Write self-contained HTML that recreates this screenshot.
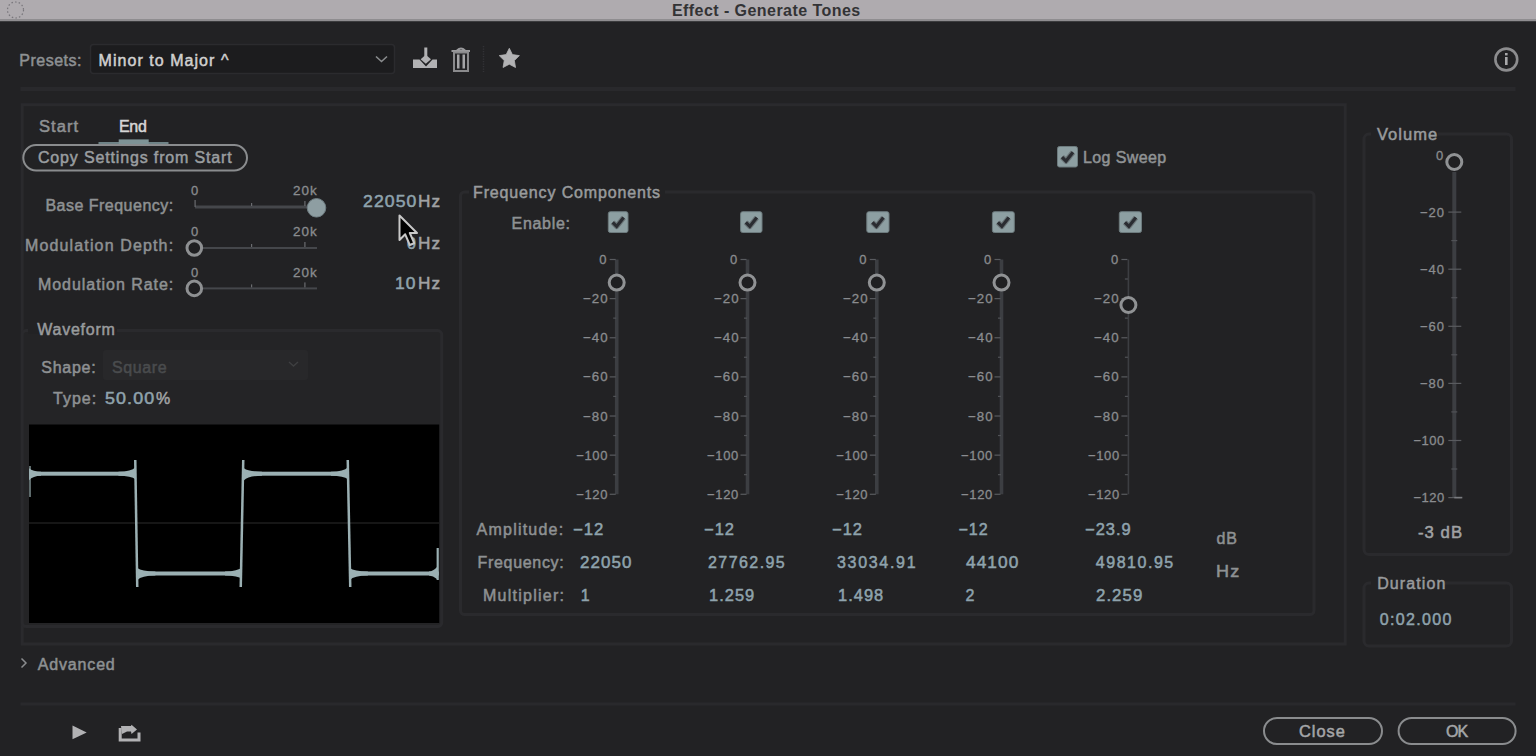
<!DOCTYPE html>
<html><head><meta charset="utf-8"><style>
html,body{margin:0;padding:0;}
body{width:1536px;height:756px;overflow:hidden;background:#222224;position:relative;font-family:"Liberation Sans",sans-serif;}
.t{position:absolute;white-space:pre;font-family:"Liberation Sans",sans-serif;-webkit-text-stroke:0.5px currentColor;}
.a{position:absolute;box-sizing:border-box;}
svg{position:absolute;left:0;top:0;}
</style></head><body>
<svg width="1536" height="756" viewBox="0 0 1536 756">
<rect x="0" y="0" width="1536" height="21" fill="#afabaf"/>
<rect x="0" y="19" width="1536" height="2" fill="#8f8d90"/>
<rect x="0" y="21" width="1536" height="1" fill="#3c3c3e"/>
<circle cx="15.5" cy="10" r="8" fill="none" stroke="#77757a" stroke-width="1.2" stroke-dasharray="1.5 2.2"/>
<rect x="90.5" y="44.5" width="304" height="29" rx="3" fill="#1c1c1e" stroke="#2b2b2e" stroke-width="1.5"/>
<polyline points="376,56.5 381.5,61.5 387,56.5" fill="none" stroke="#8a8c8e" stroke-width="1.6"/>
<polygon points="413,59.5 419.5,59.5 426,66.5 432.5,59.5 437,59.5 437,68 413,68" fill="#b2b2b4"/>
<rect x="424.3" y="47.5" width="3" height="9" fill="#b2b2b4"/>
<polygon points="425.8,54.8 431,59.3 425.8,63.8 420.6,59.3" fill="#b2b2b4"/>
<path d="M451.5,51 H470 M457,50.5 Q461,46.5 465,50.5" fill="none" stroke="#9a9a9c" stroke-width="2"/>
<rect x="454" y="52.5" width="14" height="18.5" fill="none" stroke="#8a8a8c" stroke-width="2"/>
<rect x="457" y="54.5" width="2.5" height="14" fill="#a4a4a6"/>
<rect x="462.5" y="54.5" width="2.5" height="14" fill="#a4a4a6"/>
<line x1="483.5" y1="46" x2="483.5" y2="72" stroke="#333336" stroke-width="1.5" stroke-dasharray="1.2 1.3"/>
<polygon points="509.30,48.30 512.42,54.61 519.38,55.62 514.34,60.54 515.53,67.48 509.30,64.20 503.07,67.48 504.26,60.54 499.22,55.62 506.18,54.61" fill="#b2b2b4" stroke="#b2b2b4" stroke-width="0.8" stroke-linejoin="round"/>
<circle cx="1506.3" cy="59.5" r="10.9" fill="none" stroke="#8c8c8e" stroke-width="2.6"/>
<rect x="1505" y="57" width="2.6" height="8" fill="#a8a8aa"/><rect x="1505" y="53" width="2.6" height="2.4" fill="#a8a8aa"/>
<rect x="20.5" y="87" width="1495" height="4" fill="#29292c"/>
<rect x="22.2" y="104.7" width="1323" height="539.3" fill="none" stroke="#2a2a2d" stroke-width="3"/>
<rect x="22.2" y="330.6" width="419.5" height="296" rx="4" fill="#242426" stroke="#2a2a2d" stroke-width="3"/>
<rect x="460.5" y="192" width="853.5" height="422.5" rx="4" fill="none" stroke="#2a2a2d" stroke-width="3"/>
<rect x="1364" y="134" width="147.5" height="420.5" rx="5" fill="none" stroke="#2a2a2d" stroke-width="3"/>
<rect x="1364" y="583" width="147.5" height="63" rx="5" fill="none" stroke="#2a2a2d" stroke-width="3"/>
<rect x="28" y="327" width="89" height="7" fill="#222224"/>
<rect x="469" y="188" width="196" height="8" fill="#222224"/>
<rect x="1371" y="130" width="67" height="8" fill="#222224"/>
<rect x="1371" y="579" width="74" height="8" fill="#222224"/>
<rect x="98.5" y="142" width="70" height="2.5" fill="#6f8387"/>
<rect x="118.7" y="139.4" width="30" height="5" fill="#7e9396"/>
<rect x="23.3" y="145" width="223.7" height="25.5" rx="12.75" fill="none" stroke="#8a8c8e" stroke-width="2"/>
<rect x="195" y="205.5" width="114" height="3" fill="#45474b"/>
<rect x="194.5" y="200" width="1.2" height="7" fill="#6a6c70"/>
<rect x="251" y="203" width="1.2" height="3" fill="#6a6c70"/>
<rect x="304.3" y="201" width="1.2" height="5" fill="#6a6c70"/>
<circle cx="316.5" cy="207.8" r="9.3" fill="#8e9ea2" stroke="#6f7d82" stroke-width="1"/>
<rect x="203" y="247" width="114" height="2" fill="#45474b"/>
<rect x="251" y="244" width="1.2" height="3" fill="#6a6c70"/>
<rect x="304.3" y="242" width="1.2" height="5" fill="#6a6c70"/>
<circle cx="194.3" cy="248" r="7.3" fill="#1f1f21" stroke="#8e9092" stroke-width="3"/>
<rect x="203" y="287.4" width="114" height="2" fill="#45474b"/>
<rect x="251" y="284.4" width="1.2" height="3" fill="#6a6c70"/>
<rect x="304.3" y="282.4" width="1.2" height="5" fill="#6a6c70"/>
<circle cx="194.3" cy="288.4" r="7.3" fill="#1f1f21" stroke="#8e9092" stroke-width="3"/>
<rect x="29" y="424.5" width="410.2" height="198.5" fill="#000"/>
<line x1="29" y1="523" x2="439" y2="523" stroke="#2c2c2c" stroke-width="1"/>
<rect x="29" y="471.7" width="106.4" height="4" fill="#9bb0b3"/>
<rect x="137" y="571.5" width="103.4" height="4" fill="#9bb0b3"/>
<rect x="243.3" y="471.7" width="104.59999999999997" height="4" fill="#9bb0b3"/>
<rect x="350.4" y="571.5" width="88.40000000000003" height="4" fill="#9bb0b3"/>
<polygon points="134,460 136.5,460 138.5,587 136,587" fill="#9bb0b3"/>
<polygon points="239.5,587 242,587 244.5,460 242,460" fill="#9bb0b3"/>
<polygon points="346.5,460 349,460 351.5,587 349,587" fill="#9bb0b3"/>
<polygon points="436.6,548 438.8,548 438.8,580 436.6,580" fill="#9bb0b3"/>
<polygon points="29,466 31,466 31,497 29,497" fill="#9bb0b3" opacity="0.6"/>
<path d="M118.4,471.7 Q131.4,471.5 135.4,467.2 L135.4,479.2 Q131.4,475.9 118.4,475.7 Z" fill="#9bb0b3"/>
<path d="M155.4,571.5 Q141.4,571.3 137.4,568.0 L137.4,580.0 Q141.4,575.7 155.4,575.5 Z" fill="#9bb0b3"/>
<path d="M330.9,471.7 Q343.9,471.5 347.9,467.2 L347.9,479.2 Q343.9,475.9 330.9,475.7 Z" fill="#9bb0b3"/>
<path d="M367.9,571.5 Q353.9,571.3 349.9,568.0 L349.9,580.0 Q353.9,575.7 367.9,575.5 Z" fill="#9bb0b3"/>
<path d="M225,571.5 Q238,571.3 242,567.0 L242,579.0 Q238,575.7 225,575.5 Z" fill="#9bb0b3"/>
<path d="M262,471.7 Q248,471.5 244,468.2 L244,480.2 Q248,475.9 262,475.7 Z" fill="#9bb0b3"/>
<path d="M41,471.7 Q33,471.5 29,468.2 L29,480.2 Q33,475.9 41,475.7 Z" fill="#9bb0b3"/>
<path d="M429,571.5 Q433,571.3 437,567.0 L437,579.0 Q433,575.7 429,575.5 Z" fill="#9bb0b3"/>
<rect x="103" y="350" width="205" height="30" rx="3" fill="#28282a"/>
<polyline points="289,362 293.5,366 298,362" fill="none" stroke="#3e3f41" stroke-width="1.4"/>
<rect x="1057.5" y="146.5" width="20.0" height="20.5" rx="2" fill="#8d9fa2" stroke="#6d7b7e" stroke-width="1"/>
<polyline points="1062.0,157.05 1066.0,161.05 1073.0,152.25" fill="none" stroke="#6c7679" stroke-width="5.5" stroke-linejoin="round"/>
<polyline points="1062.0,157.05 1066.0,161.05 1073.0,152.25" fill="none" stroke="#2a2c31" stroke-width="3.2"/>
<rect x="608.3" y="211.7" width="19.700000000000045" height="20.80000000000001" rx="2" fill="#8d9fa2" stroke="#6d7b7e" stroke-width="1"/>
<polyline points="612.65,222.4 616.65,226.4 623.65,217.6" fill="none" stroke="#6c7679" stroke-width="5.5" stroke-linejoin="round"/>
<polyline points="612.65,222.4 616.65,226.4 623.65,217.6" fill="none" stroke="#2a2c31" stroke-width="3.2"/>
<rect x="740.6" y="211.7" width="21.399999999999977" height="20.80000000000001" rx="2" fill="#8d9fa2" stroke="#6d7b7e" stroke-width="1"/>
<polyline points="745.8,222.4 749.8,226.4 756.8,217.6" fill="none" stroke="#6c7679" stroke-width="5.5" stroke-linejoin="round"/>
<polyline points="745.8,222.4 749.8,226.4 756.8,217.6" fill="none" stroke="#2a2c31" stroke-width="3.2"/>
<rect x="866.8" y="211.7" width="22.200000000000045" height="20.80000000000001" rx="2" fill="#8d9fa2" stroke="#6d7b7e" stroke-width="1"/>
<polyline points="872.4,222.4 876.4,226.4 883.4,217.6" fill="none" stroke="#6c7679" stroke-width="5.5" stroke-linejoin="round"/>
<polyline points="872.4,222.4 876.4,226.4 883.4,217.6" fill="none" stroke="#2a2c31" stroke-width="3.2"/>
<rect x="992.4" y="211.7" width="21.899999999999977" height="20.80000000000001" rx="2" fill="#8d9fa2" stroke="#6d7b7e" stroke-width="1"/>
<polyline points="997.8499999999999,222.4 1001.8499999999999,226.4 1008.8499999999999,217.6" fill="none" stroke="#6c7679" stroke-width="5.5" stroke-linejoin="round"/>
<polyline points="997.8499999999999,222.4 1001.8499999999999,226.4 1008.8499999999999,217.6" fill="none" stroke="#2a2c31" stroke-width="3.2"/>
<rect x="1119.3" y="211.7" width="22.200000000000045" height="20.80000000000001" rx="2" fill="#8d9fa2" stroke="#6d7b7e" stroke-width="1"/>
<polyline points="1124.9,222.4 1128.9,226.4 1135.9,217.6" fill="none" stroke="#6c7679" stroke-width="5.5" stroke-linejoin="round"/>
<polyline points="1124.9,222.4 1128.9,226.4 1135.9,217.6" fill="none" stroke="#2a2c31" stroke-width="3.2"/>
<rect x="614.9000000000001" y="259.5" width="3.6" height="234.78000000000003" fill="#3c3e42"/>
<rect x="609.7" y="258.9" width="6" height="1.2" fill="#595b5f"/>
<rect x="613.2" y="278.4" width="3" height="1.2" fill="#505256"/>
<rect x="609.7" y="298.03" width="6" height="1.2" fill="#595b5f"/>
<rect x="613.2" y="317.53" width="3" height="1.2" fill="#505256"/>
<rect x="609.7" y="337.15999999999997" width="6" height="1.2" fill="#595b5f"/>
<rect x="613.2" y="356.65999999999997" width="3" height="1.2" fill="#505256"/>
<rect x="609.7" y="376.28999999999996" width="6" height="1.2" fill="#595b5f"/>
<rect x="613.2" y="395.78999999999996" width="3" height="1.2" fill="#505256"/>
<rect x="609.7" y="415.41999999999996" width="6" height="1.2" fill="#595b5f"/>
<rect x="613.2" y="434.91999999999996" width="3" height="1.2" fill="#505256"/>
<rect x="609.7" y="454.54999999999995" width="6" height="1.2" fill="#595b5f"/>
<rect x="613.2" y="474.04999999999995" width="3" height="1.2" fill="#505256"/>
<rect x="609.7" y="493.68" width="6" height="1.2" fill="#595b5f"/>
<circle cx="616.7" cy="282.6" r="7.5" fill="#1f1f21" stroke="#909294" stroke-width="3"/>
<rect x="745.7" y="259.5" width="3.6" height="234.78000000000003" fill="#3c3e42"/>
<rect x="740.5" y="258.9" width="6" height="1.2" fill="#595b5f"/>
<rect x="744.0" y="278.4" width="3" height="1.2" fill="#505256"/>
<rect x="740.5" y="298.03" width="6" height="1.2" fill="#595b5f"/>
<rect x="744.0" y="317.53" width="3" height="1.2" fill="#505256"/>
<rect x="740.5" y="337.15999999999997" width="6" height="1.2" fill="#595b5f"/>
<rect x="744.0" y="356.65999999999997" width="3" height="1.2" fill="#505256"/>
<rect x="740.5" y="376.28999999999996" width="6" height="1.2" fill="#595b5f"/>
<rect x="744.0" y="395.78999999999996" width="3" height="1.2" fill="#505256"/>
<rect x="740.5" y="415.41999999999996" width="6" height="1.2" fill="#595b5f"/>
<rect x="744.0" y="434.91999999999996" width="3" height="1.2" fill="#505256"/>
<rect x="740.5" y="454.54999999999995" width="6" height="1.2" fill="#595b5f"/>
<rect x="744.0" y="474.04999999999995" width="3" height="1.2" fill="#505256"/>
<rect x="740.5" y="493.68" width="6" height="1.2" fill="#595b5f"/>
<circle cx="747.5" cy="282.6" r="7.5" fill="#1f1f21" stroke="#909294" stroke-width="3"/>
<rect x="875.0" y="259.5" width="3.6" height="234.78000000000003" fill="#3c3e42"/>
<rect x="869.8" y="258.9" width="6" height="1.2" fill="#595b5f"/>
<rect x="873.3" y="278.4" width="3" height="1.2" fill="#505256"/>
<rect x="869.8" y="298.03" width="6" height="1.2" fill="#595b5f"/>
<rect x="873.3" y="317.53" width="3" height="1.2" fill="#505256"/>
<rect x="869.8" y="337.15999999999997" width="6" height="1.2" fill="#595b5f"/>
<rect x="873.3" y="356.65999999999997" width="3" height="1.2" fill="#505256"/>
<rect x="869.8" y="376.28999999999996" width="6" height="1.2" fill="#595b5f"/>
<rect x="873.3" y="395.78999999999996" width="3" height="1.2" fill="#505256"/>
<rect x="869.8" y="415.41999999999996" width="6" height="1.2" fill="#595b5f"/>
<rect x="873.3" y="434.91999999999996" width="3" height="1.2" fill="#505256"/>
<rect x="869.8" y="454.54999999999995" width="6" height="1.2" fill="#595b5f"/>
<rect x="873.3" y="474.04999999999995" width="3" height="1.2" fill="#505256"/>
<rect x="869.8" y="493.68" width="6" height="1.2" fill="#595b5f"/>
<circle cx="876.8" cy="282.6" r="7.5" fill="#1f1f21" stroke="#909294" stroke-width="3"/>
<rect x="999.7" y="259.5" width="3.6" height="234.78000000000003" fill="#3c3e42"/>
<rect x="994.5" y="258.9" width="6" height="1.2" fill="#595b5f"/>
<rect x="998.0" y="278.4" width="3" height="1.2" fill="#505256"/>
<rect x="994.5" y="298.03" width="6" height="1.2" fill="#595b5f"/>
<rect x="998.0" y="317.53" width="3" height="1.2" fill="#505256"/>
<rect x="994.5" y="337.15999999999997" width="6" height="1.2" fill="#595b5f"/>
<rect x="998.0" y="356.65999999999997" width="3" height="1.2" fill="#505256"/>
<rect x="994.5" y="376.28999999999996" width="6" height="1.2" fill="#595b5f"/>
<rect x="998.0" y="395.78999999999996" width="3" height="1.2" fill="#505256"/>
<rect x="994.5" y="415.41999999999996" width="6" height="1.2" fill="#595b5f"/>
<rect x="998.0" y="434.91999999999996" width="3" height="1.2" fill="#505256"/>
<rect x="994.5" y="454.54999999999995" width="6" height="1.2" fill="#595b5f"/>
<rect x="998.0" y="474.04999999999995" width="3" height="1.2" fill="#505256"/>
<rect x="994.5" y="493.68" width="6" height="1.2" fill="#595b5f"/>
<circle cx="1001.5" cy="282.6" r="7.5" fill="#1f1f21" stroke="#909294" stroke-width="3"/>
<rect x="1127.6000000000001" y="259.5" width="1.6" height="234.78000000000003" fill="#3c3e42"/>
<rect x="1121.4" y="258.9" width="6" height="1.2" fill="#595b5f"/>
<rect x="1124.9" y="278.4" width="3" height="1.2" fill="#505256"/>
<rect x="1121.4" y="298.03" width="6" height="1.2" fill="#595b5f"/>
<rect x="1124.9" y="317.53" width="3" height="1.2" fill="#505256"/>
<rect x="1121.4" y="337.15999999999997" width="6" height="1.2" fill="#595b5f"/>
<rect x="1124.9" y="356.65999999999997" width="3" height="1.2" fill="#505256"/>
<rect x="1121.4" y="376.28999999999996" width="6" height="1.2" fill="#595b5f"/>
<rect x="1124.9" y="395.78999999999996" width="3" height="1.2" fill="#505256"/>
<rect x="1121.4" y="415.41999999999996" width="6" height="1.2" fill="#595b5f"/>
<rect x="1124.9" y="434.91999999999996" width="3" height="1.2" fill="#505256"/>
<rect x="1121.4" y="454.54999999999995" width="6" height="1.2" fill="#595b5f"/>
<rect x="1124.9" y="474.04999999999995" width="3" height="1.2" fill="#505256"/>
<rect x="1121.4" y="493.68" width="6" height="1.2" fill="#595b5f"/>
<circle cx="1128.4" cy="305" r="7.5" fill="#1f1f21" stroke="#909294" stroke-width="3"/>
<rect x="1452.3" y="172" width="4" height="325.6" fill="#3c3e42"/>
<rect x="1448.3" y="211.5" width="13" height="1.2" fill="#595b5f"/>
<rect x="1451.3" y="240.0" width="6" height="1.2" fill="#505256"/>
<rect x="1448.3" y="268.59999999999997" width="13" height="1.2" fill="#595b5f"/>
<rect x="1451.3" y="297.09999999999997" width="6" height="1.2" fill="#505256"/>
<rect x="1448.3" y="325.7" width="13" height="1.2" fill="#595b5f"/>
<rect x="1451.3" y="354.2" width="6" height="1.2" fill="#505256"/>
<rect x="1448.3" y="382.79999999999995" width="13" height="1.2" fill="#595b5f"/>
<rect x="1451.3" y="411.29999999999995" width="6" height="1.2" fill="#505256"/>
<rect x="1448.3" y="439.9" width="13" height="1.2" fill="#595b5f"/>
<rect x="1451.3" y="468.4" width="6" height="1.2" fill="#505256"/>
<rect x="1448.3" y="497.0" width="13" height="1.2" fill="#595b5f"/>
<rect x="1454.3" y="496.8" width="8" height="1.6" fill="#7a7c80"/>
<circle cx="1454.3" cy="162" r="7.5" fill="#1f1f21" stroke="#909294" stroke-width="3"/>
<polyline points="21.5,658.5 26,663 21.5,667.5" fill="none" stroke="#8a8c8e" stroke-width="1.5"/>
<rect x="20.5" y="702.5" width="1495" height="3" fill="#29292c"/>
<polygon points="72.5,725.6 86.7,732.4 72.5,739.2" fill="#b2b2b4"/>
<polyline points="120.2,728 120.2,740 139,740 139,732.5" fill="none" stroke="#b2b2b4" stroke-width="3"/>
<polygon points="121,726 131,726 131.5,724.8 137,729.5 131.5,734 131,731.5 127,731.5 122,734" fill="#b2b2b4"/>
<rect x="1264" y="718" width="118" height="26" rx="13" fill="none" stroke="#8a8c8e" stroke-width="2"/>
<rect x="1398.6" y="718" width="117" height="26" rx="13" fill="none" stroke="#8a8c8e" stroke-width="2"/>
</svg>
<span class="t" style="left:671.9px;top:2.5px;font-size:16px;line-height:16px;letter-spacing:0.45px;color:#333335;font-weight:700;-webkit-text-stroke:0;">Effect - Generate Tones</span>
<span class="t" style="left:19.2px;top:52.9px;font-size:16px;line-height:16px;letter-spacing:0.52px;color:#8e9193;">Presets:</span>
<span class="t" style="left:98.5px;top:52.6px;font-size:16px;line-height:16px;letter-spacing:1.05px;color:#d0d0d0;">Minor to Major ^</span>
<span class="t" style="transform:scaleX(1.035);transform-origin:0 0;left:39.2px;top:119.1px;font-size:16px;line-height:16px;letter-spacing:1.00px;color:#8f9193;">Start</span>
<span class="t" style="left:118.9px;top:119.1px;font-size:16px;line-height:16px;letter-spacing:-0.20px;color:#d6d6d6;">End</span>
<span class="t" style="left:37.9px;top:150.4px;font-size:16px;line-height:16px;letter-spacing:0.85px;color:#9a9ea0;">Copy Settings from Start</span>
<span class="t" style="left:45.4px;top:197.9px;font-size:16px;line-height:16px;letter-spacing:0.49px;color:#8e9193;">Base Frequency:</span>
<span class="t" style="left:25.0px;top:237.9px;font-size:16px;line-height:16px;letter-spacing:1.14px;color:#8e9193;">Modulation Depth:</span>
<span class="t" style="left:37.9px;top:277.0px;font-size:16px;line-height:16px;letter-spacing:0.96px;color:#8e9193;">Modulation Rate:</span>
<span class="t" style="transform:scaleX(1.100);transform-origin:0 0;left:362.8px;top:194.1px;font-size:16px;line-height:16px;letter-spacing:1.00px;color:#8fa3ad;">22050</span>
<span class="t" style="transform:scaleX(1.074);transform-origin:0 0;left:417.5px;top:194.1px;font-size:16px;line-height:16px;letter-spacing:1.00px;color:#a0a2a4;">Hz</span>
<span class="t" style="left:407.0px;top:235.6px;font-size:16px;line-height:16px;letter-spacing:0.00px;color:#8fa3ad;">0</span>
<span class="t" style="transform:scaleX(1.074);transform-origin:0 0;left:417.5px;top:235.6px;font-size:16px;line-height:16px;letter-spacing:1.00px;color:#a0a2a4;">Hz</span>
<span class="t" style="transform:scaleX(1.089);transform-origin:0 0;left:394.9px;top:276.3px;font-size:16px;line-height:16px;letter-spacing:1.00px;color:#8fa3ad;">10</span>
<span class="t" style="transform:scaleX(1.074);transform-origin:0 0;left:417.5px;top:276.3px;font-size:16px;line-height:16px;letter-spacing:1.00px;color:#a0a2a4;">Hz</span>
<span class="t" style="left:191.0px;top:184.0px;font-size:13px;line-height:13px;letter-spacing:0.00px;color:#8a8c8f;-webkit-text-stroke:0.3px currentColor;">0</span>
<span class="t" style="transform:scaleX(1.035);transform-origin:0 0;left:292.7px;top:184.0px;font-size:13px;line-height:13px;letter-spacing:1.00px;color:#8a8c8f;-webkit-text-stroke:0.3px currentColor;">20k</span>
<span class="t" style="left:191.0px;top:225.3px;font-size:13px;line-height:13px;letter-spacing:0.00px;color:#8a8c8f;-webkit-text-stroke:0.3px currentColor;">0</span>
<span class="t" style="transform:scaleX(1.035);transform-origin:0 0;left:292.7px;top:225.3px;font-size:13px;line-height:13px;letter-spacing:1.00px;color:#8a8c8f;-webkit-text-stroke:0.3px currentColor;">20k</span>
<span class="t" style="left:191.0px;top:265.8px;font-size:13px;line-height:13px;letter-spacing:0.00px;color:#8a8c8f;-webkit-text-stroke:0.3px currentColor;">0</span>
<span class="t" style="transform:scaleX(1.035);transform-origin:0 0;left:292.7px;top:265.8px;font-size:13px;line-height:13px;letter-spacing:1.00px;color:#8a8c8f;-webkit-text-stroke:0.3px currentColor;">20k</span>
<span class="t" style="left:37.2px;top:322.2px;font-size:16px;line-height:16px;letter-spacing:0.77px;color:#999b9d;">Waveform</span>
<span class="t" style="left:41.3px;top:359.5px;font-size:16px;line-height:16px;letter-spacing:0.74px;color:#8e9193;">Shape:</span>
<span class="t" style="left:112.0px;top:359.5px;font-size:16px;line-height:16px;letter-spacing:0.60px;color:#4a4c4e;">Square</span>
<span class="t" style="left:53.0px;top:391.0px;font-size:16px;line-height:16px;letter-spacing:1.00px;color:#8e9193;">Type:</span>
<span class="t" style="transform:scaleX(1.116);transform-origin:0 0;left:104.9px;top:391.0px;font-size:16px;line-height:16px;letter-spacing:1.00px;color:#8fa3ad;">50.00</span>
<span class="t" style="left:156.0px;top:391.0px;font-size:16px;line-height:16px;letter-spacing:0.00px;color:#a0a2a4;">%</span>
<span class="t" style="left:473.0px;top:184.5px;font-size:16px;line-height:16px;letter-spacing:0.86px;color:#999b9d;">Frequency Components</span>
<span class="t" style="left:511.5px;top:215.8px;font-size:16px;line-height:16px;letter-spacing:0.71px;color:#8e9193;">Enable:</span>
<span class="t" style="left:1082.9px;top:150.3px;font-size:16px;line-height:16px;letter-spacing:0.40px;color:#909395;">Log Sweep</span>
<span class="t" style="left:476.6px;top:522.1px;font-size:16px;line-height:16px;letter-spacing:1.22px;color:#8e9193;">Amplitude:</span>
<span class="t" style="left:477.6px;top:555.2px;font-size:16px;line-height:16px;letter-spacing:0.67px;color:#8e9193;">Frequency:</span>
<span class="t" style="left:482.9px;top:588.3px;font-size:16px;line-height:16px;letter-spacing:1.27px;color:#8e9193;">Multiplier:</span>
<span class="t" style="transform:scaleX(1.043);transform-origin:0 0;left:572.8px;top:522.1px;font-size:16px;line-height:16px;letter-spacing:1.00px;color:#8fa3ad;">−12</span>
<span class="t" style="transform:scaleX(1.060);transform-origin:0 0;left:579.8px;top:555.2px;font-size:16px;line-height:16px;letter-spacing:1.00px;color:#8fa3ad;">22050</span>
<span class="t" style="left:580.8px;top:588.3px;font-size:16px;line-height:16px;letter-spacing:0.00px;color:#8fa3ad;">1</span>
<span class="t" style="transform:scaleX(1.029);transform-origin:0 0;left:704.0px;top:522.1px;font-size:16px;line-height:16px;letter-spacing:1.00px;color:#8fa3ad;">−12</span>
<span class="t" style="left:708.0px;top:555.2px;font-size:16px;line-height:16px;letter-spacing:1.43px;color:#8fa3ad;">27762.95</span>
<span class="t" style="transform:scaleX(1.026);transform-origin:0 0;left:708.5px;top:588.3px;font-size:16px;line-height:16px;letter-spacing:1.00px;color:#8fa3ad;">1.259</span>
<span class="t" style="transform:scaleX(1.029);transform-origin:0 0;left:831.7px;top:522.1px;font-size:16px;line-height:16px;letter-spacing:1.00px;color:#8fa3ad;">−12</span>
<span class="t" style="left:837.0px;top:555.2px;font-size:16px;line-height:16px;letter-spacing:1.69px;color:#8fa3ad;">33034.91</span>
<span class="t" style="transform:scaleX(1.026);transform-origin:0 0;left:837.8px;top:588.3px;font-size:16px;line-height:16px;letter-spacing:1.00px;color:#8fa3ad;">1.498</span>
<span class="t" style="left:958.5px;top:522.1px;font-size:16px;line-height:16px;letter-spacing:1.00px;color:#8fa3ad;">−12</span>
<span class="t" style="transform:scaleX(1.079);transform-origin:0 0;left:965.6px;top:555.2px;font-size:16px;line-height:16px;letter-spacing:1.00px;color:#8fa3ad;">44100</span>
<span class="t" style="left:965.6px;top:588.3px;font-size:16px;line-height:16px;letter-spacing:0.00px;color:#8fa3ad;">2</span>
<span class="t" style="transform:scaleX(1.028);transform-origin:0 0;left:1084.8px;top:522.1px;font-size:16px;line-height:16px;letter-spacing:1.00px;color:#8fa3ad;">−23.9</span>
<span class="t" style="left:1095.8px;top:555.2px;font-size:16px;line-height:16px;letter-spacing:1.53px;color:#8fa3ad;">49810.95</span>
<span class="t" style="transform:scaleX(1.050);transform-origin:0 0;left:1095.8px;top:588.3px;font-size:16px;line-height:16px;letter-spacing:1.00px;color:#8fa3ad;">2.259</span>
<span class="t" style="left:1216.6px;top:531.0px;font-size:16px;line-height:16px;letter-spacing:0.80px;color:#8e9193;">dB</span>
<span class="t" style="transform:scaleX(1.126);transform-origin:0 0;left:1215.5px;top:564.0px;font-size:16px;line-height:16px;letter-spacing:1.00px;color:#8e9193;">Hz</span>
<span class="t" style="transform:scaleX(1.031);transform-origin:0 0;left:1376.8px;top:126.7px;font-size:16px;line-height:16px;letter-spacing:1.00px;color:#999b9d;">Volume</span>
<span class="t" style="transform:scaleX(1.043);transform-origin:0 0;left:1417.7px;top:525.0px;font-size:16px;line-height:16px;letter-spacing:1.00px;color:#a0a2a4;">-3 dB</span>
<span class="t" style="left:1377.2px;top:576.2px;font-size:16px;line-height:16px;letter-spacing:1.10px;color:#999b9d;">Duration</span>
<span class="t" style="left:1379.8px;top:611.9px;font-size:16px;line-height:16px;letter-spacing:1.34px;color:#8fa3ad;">0:02.000</span>
<span class="t" style="left:37.8px;top:656.5px;font-size:16px;line-height:16px;letter-spacing:0.83px;color:#8e9193;">Advanced</span>
<span class="t" style="transform:scaleX(1.022);transform-origin:0 0;left:1299.0px;top:724.0px;font-size:16px;line-height:16px;letter-spacing:1.00px;color:#a4a6a8;">Close</span>
<span class="t" style="left:1446.0px;top:724.0px;font-size:16px;line-height:16px;letter-spacing:-1.00px;color:#a4a6a8;">OK</span>
<span class="t" style="left:599.2px;top:253.0px;font-size:13px;line-height:13px;letter-spacing:0.00px;color:#8a8c8f;-webkit-text-stroke:0.3px currentColor;">0</span>
<span class="t" style="transform:scaleX(1.021);transform-origin:0 0;left:582.7px;top:292.1px;font-size:13px;line-height:13px;letter-spacing:1.00px;color:#8a8c8f;-webkit-text-stroke:0.3px currentColor;">−20</span>
<span class="t" style="transform:scaleX(1.021);transform-origin:0 0;left:582.7px;top:331.3px;font-size:13px;line-height:13px;letter-spacing:1.00px;color:#8a8c8f;-webkit-text-stroke:0.3px currentColor;">−40</span>
<span class="t" style="transform:scaleX(1.021);transform-origin:0 0;left:582.7px;top:370.4px;font-size:13px;line-height:13px;letter-spacing:1.00px;color:#8a8c8f;-webkit-text-stroke:0.3px currentColor;">−60</span>
<span class="t" style="transform:scaleX(1.021);transform-origin:0 0;left:582.7px;top:409.5px;font-size:13px;line-height:13px;letter-spacing:1.00px;color:#8a8c8f;-webkit-text-stroke:0.3px currentColor;">−80</span>
<span class="t" style="left:576.2px;top:448.6px;font-size:13px;line-height:13px;letter-spacing:0.67px;color:#8a8c8f;-webkit-text-stroke:0.3px currentColor;">−100</span>
<span class="t" style="left:576.2px;top:487.8px;font-size:13px;line-height:13px;letter-spacing:0.67px;color:#8a8c8f;-webkit-text-stroke:0.3px currentColor;">−120</span>
<span class="t" style="left:730.0px;top:253.0px;font-size:13px;line-height:13px;letter-spacing:0.00px;color:#8a8c8f;-webkit-text-stroke:0.3px currentColor;">0</span>
<span class="t" style="transform:scaleX(1.021);transform-origin:0 0;left:713.5px;top:292.1px;font-size:13px;line-height:13px;letter-spacing:1.00px;color:#8a8c8f;-webkit-text-stroke:0.3px currentColor;">−20</span>
<span class="t" style="transform:scaleX(1.021);transform-origin:0 0;left:713.5px;top:331.3px;font-size:13px;line-height:13px;letter-spacing:1.00px;color:#8a8c8f;-webkit-text-stroke:0.3px currentColor;">−40</span>
<span class="t" style="transform:scaleX(1.021);transform-origin:0 0;left:713.5px;top:370.4px;font-size:13px;line-height:13px;letter-spacing:1.00px;color:#8a8c8f;-webkit-text-stroke:0.3px currentColor;">−60</span>
<span class="t" style="transform:scaleX(1.021);transform-origin:0 0;left:713.5px;top:409.5px;font-size:13px;line-height:13px;letter-spacing:1.00px;color:#8a8c8f;-webkit-text-stroke:0.3px currentColor;">−80</span>
<span class="t" style="left:707.0px;top:448.6px;font-size:13px;line-height:13px;letter-spacing:0.67px;color:#8a8c8f;-webkit-text-stroke:0.3px currentColor;">−100</span>
<span class="t" style="left:707.0px;top:487.8px;font-size:13px;line-height:13px;letter-spacing:0.67px;color:#8a8c8f;-webkit-text-stroke:0.3px currentColor;">−120</span>
<span class="t" style="left:859.3px;top:253.0px;font-size:13px;line-height:13px;letter-spacing:0.00px;color:#8a8c8f;-webkit-text-stroke:0.3px currentColor;">0</span>
<span class="t" style="transform:scaleX(1.021);transform-origin:0 0;left:842.8px;top:292.1px;font-size:13px;line-height:13px;letter-spacing:1.00px;color:#8a8c8f;-webkit-text-stroke:0.3px currentColor;">−20</span>
<span class="t" style="transform:scaleX(1.021);transform-origin:0 0;left:842.8px;top:331.3px;font-size:13px;line-height:13px;letter-spacing:1.00px;color:#8a8c8f;-webkit-text-stroke:0.3px currentColor;">−40</span>
<span class="t" style="transform:scaleX(1.021);transform-origin:0 0;left:842.8px;top:370.4px;font-size:13px;line-height:13px;letter-spacing:1.00px;color:#8a8c8f;-webkit-text-stroke:0.3px currentColor;">−60</span>
<span class="t" style="transform:scaleX(1.021);transform-origin:0 0;left:842.8px;top:409.5px;font-size:13px;line-height:13px;letter-spacing:1.00px;color:#8a8c8f;-webkit-text-stroke:0.3px currentColor;">−80</span>
<span class="t" style="left:836.3px;top:448.6px;font-size:13px;line-height:13px;letter-spacing:0.67px;color:#8a8c8f;-webkit-text-stroke:0.3px currentColor;">−100</span>
<span class="t" style="left:836.3px;top:487.8px;font-size:13px;line-height:13px;letter-spacing:0.67px;color:#8a8c8f;-webkit-text-stroke:0.3px currentColor;">−120</span>
<span class="t" style="left:984.0px;top:253.0px;font-size:13px;line-height:13px;letter-spacing:0.00px;color:#8a8c8f;-webkit-text-stroke:0.3px currentColor;">0</span>
<span class="t" style="transform:scaleX(1.021);transform-origin:0 0;left:967.5px;top:292.1px;font-size:13px;line-height:13px;letter-spacing:1.00px;color:#8a8c8f;-webkit-text-stroke:0.3px currentColor;">−20</span>
<span class="t" style="transform:scaleX(1.021);transform-origin:0 0;left:967.5px;top:331.3px;font-size:13px;line-height:13px;letter-spacing:1.00px;color:#8a8c8f;-webkit-text-stroke:0.3px currentColor;">−40</span>
<span class="t" style="transform:scaleX(1.021);transform-origin:0 0;left:967.5px;top:370.4px;font-size:13px;line-height:13px;letter-spacing:1.00px;color:#8a8c8f;-webkit-text-stroke:0.3px currentColor;">−60</span>
<span class="t" style="transform:scaleX(1.021);transform-origin:0 0;left:967.5px;top:409.5px;font-size:13px;line-height:13px;letter-spacing:1.00px;color:#8a8c8f;-webkit-text-stroke:0.3px currentColor;">−80</span>
<span class="t" style="left:961.0px;top:448.6px;font-size:13px;line-height:13px;letter-spacing:0.67px;color:#8a8c8f;-webkit-text-stroke:0.3px currentColor;">−100</span>
<span class="t" style="left:961.0px;top:487.8px;font-size:13px;line-height:13px;letter-spacing:0.67px;color:#8a8c8f;-webkit-text-stroke:0.3px currentColor;">−120</span>
<span class="t" style="left:1110.9px;top:253.0px;font-size:13px;line-height:13px;letter-spacing:0.00px;color:#8a8c8f;-webkit-text-stroke:0.3px currentColor;">0</span>
<span class="t" style="transform:scaleX(1.021);transform-origin:0 0;left:1094.4px;top:292.1px;font-size:13px;line-height:13px;letter-spacing:1.00px;color:#8a8c8f;-webkit-text-stroke:0.3px currentColor;">−20</span>
<span class="t" style="transform:scaleX(1.021);transform-origin:0 0;left:1094.4px;top:331.3px;font-size:13px;line-height:13px;letter-spacing:1.00px;color:#8a8c8f;-webkit-text-stroke:0.3px currentColor;">−40</span>
<span class="t" style="transform:scaleX(1.021);transform-origin:0 0;left:1094.4px;top:370.4px;font-size:13px;line-height:13px;letter-spacing:1.00px;color:#8a8c8f;-webkit-text-stroke:0.3px currentColor;">−60</span>
<span class="t" style="transform:scaleX(1.021);transform-origin:0 0;left:1094.4px;top:409.5px;font-size:13px;line-height:13px;letter-spacing:1.00px;color:#8a8c8f;-webkit-text-stroke:0.3px currentColor;">−80</span>
<span class="t" style="left:1087.9px;top:448.6px;font-size:13px;line-height:13px;letter-spacing:0.67px;color:#8a8c8f;-webkit-text-stroke:0.3px currentColor;">−100</span>
<span class="t" style="left:1087.9px;top:487.8px;font-size:13px;line-height:13px;letter-spacing:0.67px;color:#8a8c8f;-webkit-text-stroke:0.3px currentColor;">−120</span>
<span class="t" style="left:1436.0px;top:148.6px;font-size:13px;line-height:13px;letter-spacing:0.00px;color:#8a8c8f;-webkit-text-stroke:0.3px currentColor;">0</span>
<span class="t" style="left:1420.0px;top:205.6px;font-size:13px;line-height:13px;letter-spacing:1.00px;color:#8a8c8f;-webkit-text-stroke:0.3px currentColor;">−20</span>
<span class="t" style="left:1420.0px;top:262.7px;font-size:13px;line-height:13px;letter-spacing:1.00px;color:#8a8c8f;-webkit-text-stroke:0.3px currentColor;">−40</span>
<span class="t" style="left:1420.0px;top:319.8px;font-size:13px;line-height:13px;letter-spacing:1.00px;color:#8a8c8f;-webkit-text-stroke:0.3px currentColor;">−60</span>
<span class="t" style="left:1420.0px;top:376.9px;font-size:13px;line-height:13px;letter-spacing:1.00px;color:#8a8c8f;-webkit-text-stroke:0.3px currentColor;">−80</span>
<span class="t" style="left:1413.5px;top:434.0px;font-size:13px;line-height:13px;letter-spacing:0.50px;color:#8a8c8f;-webkit-text-stroke:0.3px currentColor;">−100</span>
<span class="t" style="left:1413.5px;top:491.1px;font-size:13px;line-height:13px;letter-spacing:0.50px;color:#8a8c8f;-webkit-text-stroke:0.3px currentColor;">−120</span>
<svg width="1536" height="756" viewBox="0 0 1536 756" style="position:absolute;left:0;top:0"><path d="M399.5,215.5 L399.5,240 L405.2,234.3 L409.8,245 L414.2,243.2 L409.8,233 L417,233 Z" fill="#000" stroke="#c8c8c8" stroke-width="2" stroke-linejoin="round"/></svg>
</body></html>
